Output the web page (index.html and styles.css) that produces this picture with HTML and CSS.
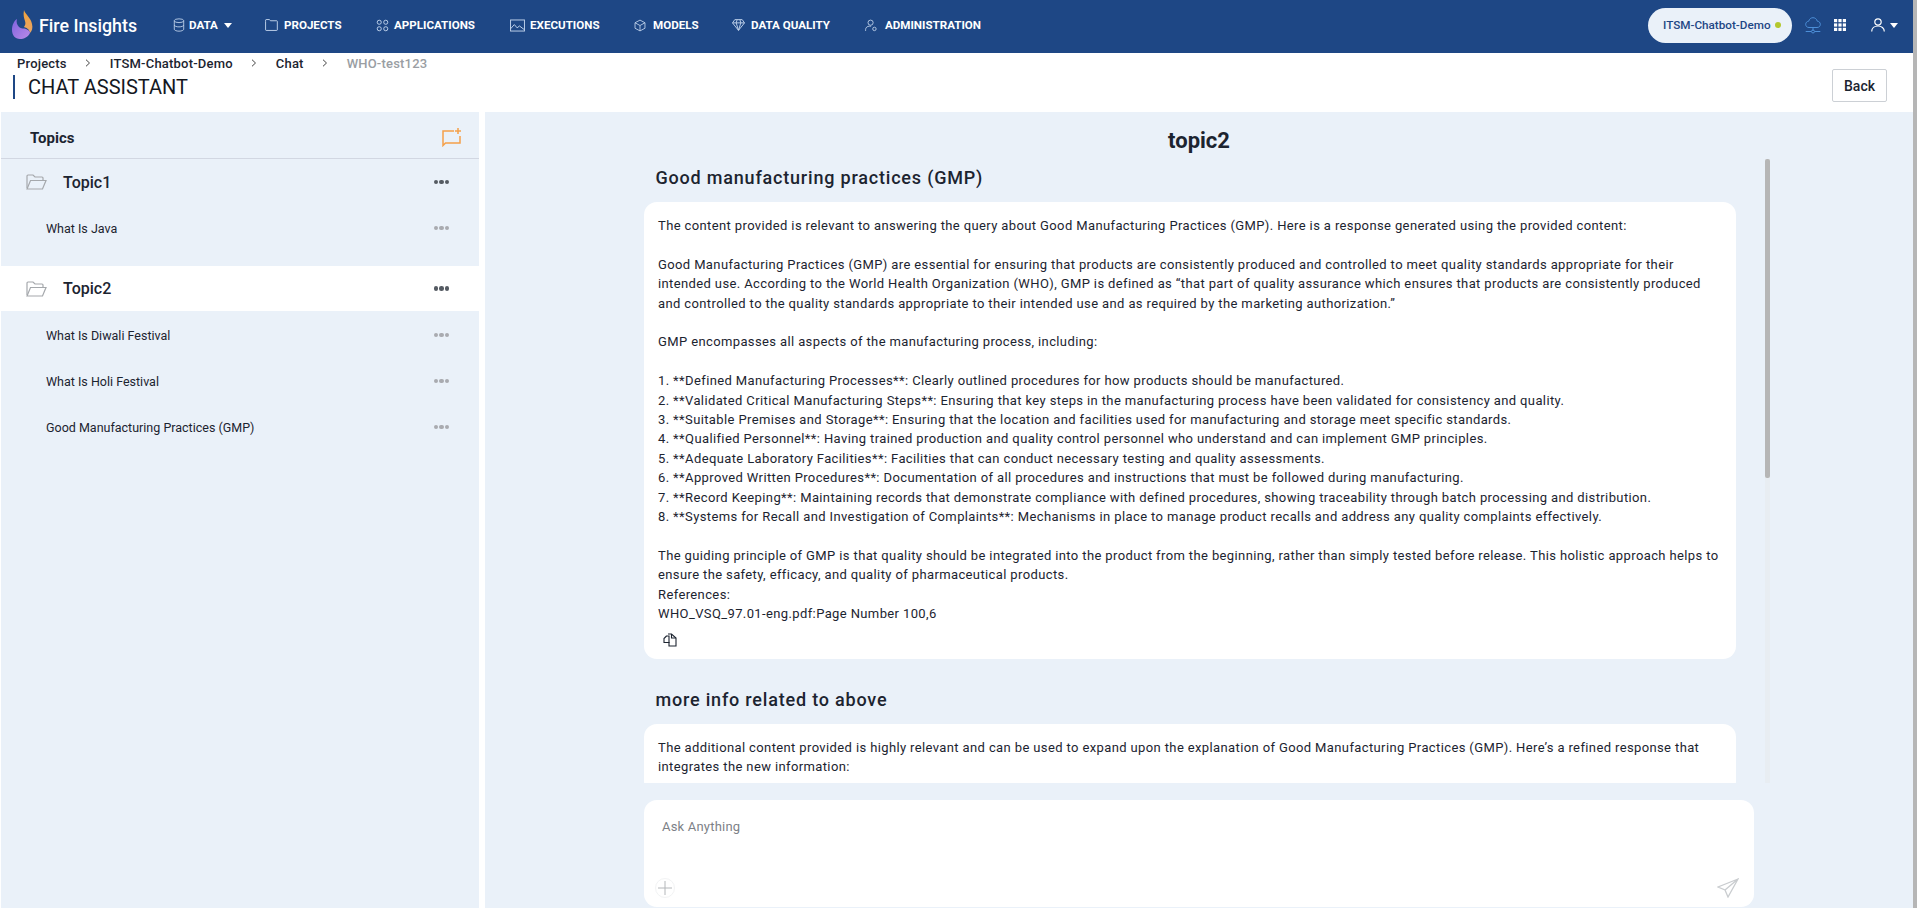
FILE: index.html
```html
<!DOCTYPE html>
<html lang="en">
<head>
  <meta charset="UTF-8" />
  <title>Fire Insights - Chat Assistant</title>
  <link rel="stylesheet" href="styles.css">
</head>
<body>
  <div class="page">
    <!-- top nav -->
    <nav class="navbar">
      <div class="brand">
        <svg class="brand-logo" viewBox="0 0 22 30" width="22" height="30">
          <defs>
            <linearGradient id="flameTop" x1="0" y1="0" x2="0" y2="1"><stop offset="0" stop-color="#f2a33c"/><stop offset="1" stop-color="#e8a566"/></linearGradient>
            <linearGradient id="flameBottom" x1="0" y1="0" x2="1" y2="1"><stop offset="0" stop-color="#7f63e0"/><stop offset="1" stop-color="#b98ae6"/></linearGradient>
          </defs>
          <path d="M13 0c1 4 7 8 8 14 1 4 0 7-2 9-1-4-3-5-6-6 1-2 2-3 1-6-1-3-2-6-1-11z" fill="url(#flameTop)"/>
          <path d="M6 9c-1 3 0 6 2 8 2 2 5 1 7 2 3 1 4 3 4 4-2 4-6 6-10 6-5 0-8-4-8-9 0-5 2-9 5-11z" fill="url(#flameBottom)"/>
        </svg>
        <span class="brand-name">Fire Insights</span>
      </div>
      <ul class="nav-list">
        <li class="nav-item nav-data">
          <svg class="nav-icon" viewBox="0 0 14 16" width="12" height="14"><ellipse cx="7" cy="3" rx="5.5" ry="2.2"/><path d="M1.5 3v10c0 1.2 2.5 2.2 5.5 2.2s5.5-1 5.5-2.2V3M1.5 8c0 1.2 2.5 2.2 5.5 2.2s5.5-1 5.5-2.2"/></svg>
          <span>DATA</span><i class="caret"></i>
        </li>
        <li class="nav-item nav-projects">
          <svg class="nav-icon" viewBox="0 0 14 13" width="13" height="12"><path d="M.6 2.5V1.200c0-.3.3-.6.6-.6h3.600l1 1.300h6.900c.3 0 .6.3.6.6v9.300c0 .3-.3.6-.6.6H1.200c-.3 0-.6-.3-.6-.6z"/></svg>
          <span>PROJECTS</span>
        </li>
        <li class="nav-item nav-apps">
          <svg class="nav-icon" viewBox="0 0 14 14" width="13" height="13"><circle cx="3.5" cy="3.5" r="2.2"/><circle cx="10.5" cy="3.5" r="2.2"/><circle cx="3.5" cy="10.5" r="2.2"/><circle cx="10.5" cy="10.5" r="2.2"/></svg>
          <span>APPLICATIONS</span>
        </li>
        <li class="nav-item nav-exec">
          <svg class="nav-icon" viewBox="0 0 16 13" width="15" height="13"><rect x=".6" y=".6" width="14.8" height="11.8"/><path d="M.6 10l4-4.500 3 3.500 2.500-2 5.300 4"/></svg>
          <span>EXECUTIONS</span>
        </li>
        <li class="nav-item nav-models">
          <svg class="nav-icon" viewBox="0 0 14 14" width="12" height="13"><path d="M7 .7l5.800 3.100v6.400L7 13.300l-5.800-3.100V3.800zM1.200 3.800L7 7l5.800-3.200M7 7v6.300"/></svg>
          <span>MODELS</span>
        </li>
        <li class="nav-item nav-quality">
          <svg class="nav-icon" viewBox="0 0 14 13" width="13" height="12"><path d="M3 .7h8l2.500 3.500L7 12.300.5 4.200zM.5 4.200h13M4.500 4.200L7 12.300l2.500-8.100M4.500 4.200L5.500.7M9.500 4.200L8.500.7"/></svg>
          <span>DATA QUALITY</span>
        </li>
        <li class="nav-item nav-admin">
          <svg class="nav-icon" viewBox="0 0 14 14" width="12" height="13"><circle cx="6.5" cy="3.7" r="3"/><path d="M.7 13.300v-1.500c0-2.500 2-4 4.500-4h2"/><circle cx="11" cy="11" r="2"/></svg>
          <span>ADMINISTRATION</span>
        </li>
      </ul>
      <div class="nav-right">
        <div class="project-pill">ITSM-Chatbot-Demo<i class="status-dot"></i></div>
        <svg class="cloud-icon" viewBox="0 0 16 17" width="16" height="17"><path d="M4 10.500C1.800 10.500.7 9 .7 7.300c0-1.700 1.300-3 3-3.100C4.300 2 6 .7 8 .7s3.700 1.300 4.300 3.500c1.700.1 3 1.400 3 3.100 0 1.700-1.100 3.200-3.300 3.200zM8 10.500v3.500M.7 14.500h5.500M9.800 14.500h5.500"/><circle cx="8" cy="14.5" r="1.5"/></svg>
        <svg class="grid-icon" viewBox="0 0 12 12" width="12" height="12">
          <rect x="0" y="0" width="3.2" height="3.2"/><rect x="4.4" y="0" width="3.2" height="3.2"/><rect x="8.8" y="0" width="3.2" height="3.2"/>
          <rect x="0" y="4.4" width="3.2" height="3.2"/><rect x="4.4" y="4.4" width="3.2" height="3.2"/><rect x="8.8" y="4.4" width="3.2" height="3.2"/>
          <rect x="0" y="8.8" width="3.2" height="3.2"/><rect x="4.4" y="8.8" width="3.2" height="3.2"/><rect x="8.8" y="8.8" width="3.2" height="3.2"/>
        </svg>
        <div class="user-menu">
          <svg class="user-icon" viewBox="0 0 14 14" width="14" height="14"><circle cx="7" cy="4" r="3.2"/><path d="M.7 13.500c0-3.300 2.800-5.500 6.300-5.500s6.300 2.200 6.300 5.500"/></svg>
          <i class="caret"></i>
        </div>
      </div>
    </nav>

    <!-- page header -->
    <header class="page-head">
      <div class="head-left">
        <div class="breadcrumb">
          <span class="crumb">Projects</span><svg class="crumb-sep" viewBox="0 0 6 8" width="6" height="8"><path d="M1 .7L4.500 4 1 7.300"/></svg>
          <span class="crumb">ITSM-Chatbot-Demo</span><svg class="crumb-sep" viewBox="0 0 6 8" width="6" height="8"><path d="M1 .7L4.500 4 1 7.300"/></svg>
          <span class="crumb">Chat</span><svg class="crumb-sep" viewBox="0 0 6 8" width="6" height="8"><path d="M1 .7L4.500 4 1 7.300"/></svg>
          <span class="crumb crumb-last">WHO-test123</span>
        </div>
        <h1 class="page-title">CHAT ASSISTANT</h1>
      </div>
      <button class="back-btn">Back</button>
    </header>

    <div class="content">
      <!-- topics -->
      <aside class="sidebar">
        <div class="topics-head">
          <span>Topics</span>
          <svg class="new-topic" viewBox="0 0 20 19" width="20" height="19"><path d="M12 3H1v14.500L3.500 15H18V8"/><path d="M16 0v6M13 3h6"/></svg>
        </div>
        <div class="topic-row">
          <svg class="folder" viewBox="0 0 21 16" width="21" height="16"><path d="M1 14V2c0-.6.4-1 1-1h5l2 2h7c.6 0 1 .4 1 1v2"/><path d="M1 15l3.500-8.500h15.500L16.500 15z"/></svg>
          <span class="topic-name">Topic1</span>
          <span class="dots"><i></i><i></i><i></i></span>
        </div>
        <div class="chat-row"><span>What Is Java</span><span class="dots dots-light"><i></i><i></i><i></i></span></div>
        <div class="topic-row topic-active">
          <svg class="folder" viewBox="0 0 21 16" width="21" height="16"><path d="M1 14V2c0-.6.4-1 1-1h5l2 2h7c.6 0 1 .4 1 1v2"/><path d="M1 15l3.500-8.500h15.500L16.500 15z"/></svg>
          <span class="topic-name">Topic2</span>
          <span class="dots"><i></i><i></i><i></i></span>
        </div>
        <div class="chat-row"><span>What Is Diwali Festival</span><span class="dots dots-light"><i></i><i></i><i></i></span></div>
        <div class="chat-row"><span>What Is Holi Festival</span><span class="dots dots-light"><i></i><i></i><i></i></span></div>
        <div class="chat-row"><span>Good Manufacturing Practices (GMP)</span><span class="dots dots-light"><i></i><i></i><i></i></span></div>
      </aside>

      <!-- chat -->
      <main class="chat">
        <h2 class="chat-title">topic2</h2>
        <div class="chat-body">
          <div class="messages">
            <h3 class="question">Good manufacturing practices (GMP)</h3>
            <div class="answer">
              <div class="answer-text">The content provided is relevant to answering the query about Good Manufacturing Practices (GMP). Here is a response generated using the provided content:

Good Manufacturing Practices (GMP) are essential for ensuring that products are consistently produced and controlled to meet quality standards appropriate for their intended use. According to the World Health Organization (WHO), GMP is defined as “that part of quality assurance which ensures that products are consistently produced and controlled to the quality standards appropriate to their intended use and as required by the marketing authorization.”

GMP encompasses all aspects of the manufacturing process, including:

1. **Defined Manufacturing Processes**: Clearly outlined procedures for how products should be manufactured.
2. **Validated Critical Manufacturing Steps**: Ensuring that key steps in the manufacturing process have been validated for consistency and quality.
3. **Suitable Premises and Storage**: Ensuring that the location and facilities used for manufacturing and storage meet specific standards.
4. **Qualified Personnel**: Having trained production and quality control personnel who understand and can implement GMP principles.
5. **Adequate Laboratory Facilities**: Facilities that can conduct necessary testing and quality assessments.
6. **Approved Written Procedures**: Documentation of all procedures and instructions that must be followed during manufacturing.
7. **Record Keeping**: Maintaining records that demonstrate compliance with defined procedures, showing traceability through batch processing and distribution.
8. **Systems for Recall and Investigation of Complaints**: Mechanisms in place to manage product recalls and address any quality complaints effectively.

The guiding principle of GMP is that quality should be integrated into the product from the beginning, rather than simply tested before release. This holistic approach helps to ensure the safety, efficacy, and quality of pharmaceutical products.
References:
WHO_VSQ_97.01-eng.pdf:Page Number 100,6</div>
              <svg class="copy-icon" viewBox="0 0 14 14" width="14" height="14"><path d="M5 1h3.500L13 5v8H6V9"/><path d="M3.500 3L1 5.500V9.500h5V3zM8.500 1v4H13"/></svg>
            </div>
            <h3 class="question question-next">more info related to above</h3>
            <div class="answer answer-cut">
              <div class="answer-text">The additional content provided is highly relevant and can be used to expand upon the explanation of Good Manufacturing Practices (GMP). Here’s a refined response that integrates the new information:</div>
            </div>
          </div>
          <div class="scroll-track"><div class="scroll-thumb"></div></div>
        </div>
        <div class="ask-box">
          <div class="ask-placeholder">Ask Anything</div>
          <div class="ask-actions">
            <span class="ask-plus"><svg viewBox="0 0 14 14" width="14" height="14"><path d="M7 0v14M0 7h14"/></svg></span>
            <svg class="send-icon" viewBox="0 0 22 20" width="22" height="20"><path d="M21 1L1 9l7 3 3 7zM21 1L8 12"/></svg>
          </div>
        </div>
      </main>
    </div>
  </div>
  <div class="window-scroll"></div>
</body>
</html>
```

FILE: styles.css
```css
* {
  box-sizing: border-box;
}

body {
  display: flex;
  height: 908px;
  margin: 0;
  overflow: hidden;
  background: #fff;
  color: #1c2430;
  font-family: Roboto, "Liberation Sans", sans-serif;
  font-size: 13px;
}

.page {
  flex: 1;
  min-width: 0;
  display: flex;
  flex-direction: column;
}

.window-scroll {
  width: 4px;
  background: #b6b6b6;
}

/* ===== top nav ===== */
.navbar {
  display: flex;
  align-items: center;
  height: 53px;
  flex-shrink: 0;
  padding: 0 0 3px 11px;
  background: #1e4785;
  color: #fff;
}

.brand {
  display: flex;
  align-items: center;
  gap: 6px;
  width: 162px;
}

.brand-name {
  font-size: 17.8px;
  font-weight: 500;
}

.nav-list {
  display: flex;
  margin: 0;
  padding: 0;
  list-style: none;
}

.nav-item {
  display: flex;
  align-items: center;
  gap: 5px;
  font-size: 11.6px;
  font-weight: 700;
}

.nav-icon {
  fill: none;
  stroke: #c4d6ee;
  stroke-width: 1;
}

.nav-data { width: 92px; gap: 4px; }
.nav-projects { width: 111px; gap: 6px; }
.nav-apps { width: 134px; }
.nav-exec { width: 124px; }
.nav-models { width: 98px; gap: 7px; }
.nav-quality { width: 133px; gap: 6px; }
.nav-admin { gap: 8px; }

.caret {
  width: 0;
  height: 0;
  margin-left: 2px;
  border-left: 4px solid transparent;
  border-right: 4px solid transparent;
  border-top: 5px solid #fff;
}

.nav-right {
  display: flex;
  align-items: center;
  margin-left: auto;
  padding-right: 15px;
}

.project-pill {
  display: flex;
  align-items: center;
  justify-content: space-between;
  width: 144px;
  height: 35px;
  padding: 0 11px 0 15px;
  border-radius: 18px;
  background: #eaf1f9;
  color: #1e4785;
  font-size: 11.7px;
  font-weight: 500;
  white-space: nowrap;
}

.status-dot {
  width: 6px;
  height: 6px;
  border-radius: 50%;
  background: #b4c82e;
}

.cloud-icon {
  margin-left: 13px;
  fill: none;
  stroke: #4d8fd8;
  stroke-width: 1;
}

.grid-icon {
  margin-left: 13px;
  fill: #fff;
}

.user-menu {
  display: flex;
  align-items: center;
  gap: 3px;
  margin-left: 25px;
}

.user-icon {
  fill: none;
  stroke: #fff;
  stroke-width: 1.2;
}

/* ===== page header ===== */
.page-head {
  display: flex;
  align-items: flex-start;
  justify-content: space-between;
  height: 59px;
  flex-shrink: 0;
  padding: 0 26px 0 13px;
}

.breadcrumb {
  display: flex;
  align-items: center;
  height: 20px;
  padding-left: 4px;
  font-weight: 500;
  letter-spacing: .2px;
}

.crumb-sep {
  margin: 0 18.5px;
  fill: none;
  stroke: #444;
  stroke-width: 1;
}

.crumb-last {
  color: #9a9ea3;
}

.page-title {
  height: 24px;
  margin: 2px 0 0;
  padding-left: 13px;
  border-left: 2px solid #1e4785;
  color: #14181f;
  font-size: 20px;
  font-weight: 400;
  line-height: 24px;
}

.back-btn {
  width: 55px;
  height: 33px;
  margin-top: 16px;
  border: 1px solid #ccd0d5;
  border-radius: 2px;
  background: #fff;
  color: #1c2430;
  font-family: inherit;
  font-size: 14px;
  font-weight: 500;
}

/* ===== content ===== */
.content {
  display: flex;
  flex: 1;
  min-height: 0;
  padding-left: 1px;
}

.sidebar {
  width: 478px;
  margin-right: 6px;
  flex-shrink: 0;
  background: #eaf1f9;
}

.topics-head {
  display: flex;
  align-items: center;
  justify-content: space-between;
  height: 47px;
  padding: 5px 17px 0 29px;
  border-bottom: 1px solid #d2d7e2;
  font-size: 15px;
  font-weight: 700;
}

.new-topic {
  fill: none;
  stroke: #f5a04a;
  stroke-width: 1.5;
}

.topic-row {
  display: flex;
  align-items: center;
  height: 46px;
  padding: 0 30px 0 25px;
}

.topic-active {
  height: 45px;
  margin: 15px 0 1px;
  background: #fff;
}

.topic-name {
  margin-left: 16px;
  font-size: 16px;
  font-weight: 500;
}

.folder {
  fill: none;
  stroke: #a5a8ac;
  stroke-width: 1.2;
}

.chat-row {
  display: flex;
  align-items: center;
  justify-content: space-between;
  height: 46px;
  padding: 0 30px 0 45px;
  font-size: 12.5px;
}

.dots {
  display: flex;
  gap: 1px;
  margin-left: auto;
}

.dots i {
  width: 4.5px;
  height: 4.5px;
  border-radius: 50%;
  background: #555b63;
}

.dots-light i {
  background: #a9abb0;
}

/* ===== chat ===== */
.chat {
  flex: 1;
  min-width: 0;
  display: flex;
  flex-direction: column;
  background: #eaf1f9;
}

.chat-title {
  height: 47px;
  margin: 0;
  padding-top: 17px;
  text-align: center;
  font-size: 22px;
  font-weight: 700;
  line-height: 24px;
}

.chat-body {
  display: flex;
  height: 624px;
  margin-left: 159px;
}

.messages {
  width: 1092px;
  padding-top: 2px;
  overflow: hidden;
}

.question {
  height: 41px;
  margin: 0;
  padding-left: 11.5px;
  font-size: 18px;
  font-weight: 500;
  line-height: 34px;
  letter-spacing: .8px;
}

.question-next {
  margin-top: 24px;
}

.answer {
  padding: 14px 13px 6px 14px;
  border-radius: 13px;
  background: #fff;
}

.answer-text {
  white-space: pre-line;
  line-height: 19.4px;
  letter-spacing: .38px;
}

.copy-icon {
  display: block;
  margin: 9px 0 6px 5px;
  fill: none;
  stroke: #1c2430;
  stroke-width: 1.1;
}

.answer-cut {
  height: 70px;
}

.scroll-track {
  width: 5px;
  margin-left: 29px;
  background: #e8edf2;
}

.scroll-thumb {
  height: 319px;
  border-radius: 2px;
  background: #b6b6b6;
}

.ask-box {
  display: flex;
  flex-direction: column;
  justify-content: space-between;
  width: 1110px;
  height: 107px;
  margin: 17px 0 0 159px;
  padding: 19px 15px 9px 18px;
  border-radius: 13px;
  background: #fff;
}

.ask-placeholder {
  color: #7d8187;
  letter-spacing: .2px;
}

.ask-actions {
  display: flex;
  align-items: center;
  justify-content: space-between;
  margin-left: -7px;
}

.ask-plus {
  display: flex;
  align-items: center;
  justify-content: center;
  width: 20px;
  height: 20px;
  border: 1px solid #f2f3f4;
  border-radius: 50%;
}

.ask-plus svg {
  stroke: #b4b7ba;
  fill: none;
}

.send-icon {
  fill: none;
  stroke: #c9cccf;
  stroke-width: 1.3;
}
```
